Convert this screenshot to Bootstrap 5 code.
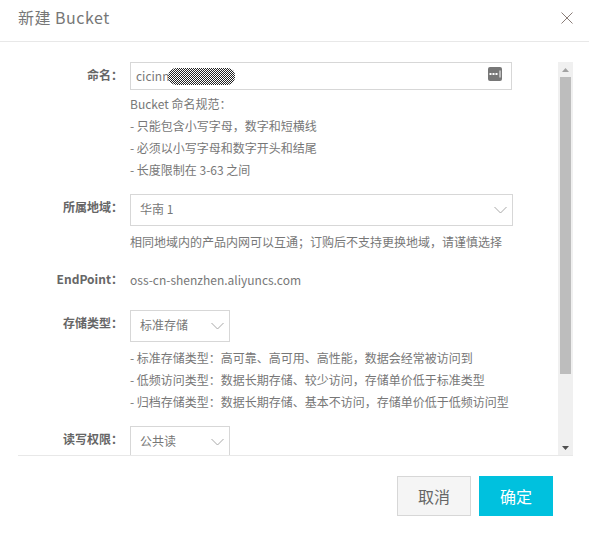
<!DOCTYPE html>
<html lang="zh">
<head>
<meta charset="utf-8">
<title>新建 Bucket</title>
<link href="https://cdn.jsdelivr.net/npm/bootstrap@5.3.0/dist/css/bootstrap.min.css" rel="stylesheet">
<style>
html,body{height:534px;overflow:hidden;background:#fff}
body{font-family:"Noto Sans CJK SC","Noto Sans",sans-serif;font-size:12px;color:#777}
.dlg-head{height:42px;padding:0 16px 0 18px;border-bottom:1px solid #e8e8e8}
.dlg-title{font-size:16px;font-weight:400;color:#777;margin:0;line-height:36px;letter-spacing:.5px;margin-top:-7px}
.x-btn{background:none;border:0;padding:0;line-height:0;margin-top:-5px}
.dlg-scroll{height:414px;margin:0 16px 0 18px;border-bottom:1px solid #e8e8e8;padding-top:20px;overflow:hidden}
.dlg-form{width:540px;height:393px;overflow:hidden}
.frow{display:flex}
.flabel{width:105px;flex:none;text-align:right;font-weight:700;line-height:26px;color:#666}
.fbody{margin-left:7px;flex:1;min-width:0}
.name-box{width:382px;height:28px;border:1px solid #d7d7d7;padding:0 5px;line-height:26px}
.blot{width:67px;height:17px;border-radius:9px 8px 8px 9px;margin-left:-1px;background-color:#fff;background-image:conic-gradient(#222 25%,#fff 0 50%,#222 0 75%,#fff 0);background-size:2px 2px}
.dots-ic{margin:-4px 4px 0 auto}
.hint{line-height:22px;margin:3px 0 0;color:#777}
.hint-sel{margin-top:5px}
.ep-text{line-height:28px}
.fake-sel{height:32px;border:1px solid #d7d7d7;padding:0 5px 2px 9px;color:#777}
.fake-sel svg{margin-top:2px}
.sel-wide{width:383px}
.sel-narrow{width:100px}
.sbar{width:15px;height:393px;background:#f0f0f0}
.sbar-btn{height:15px;flex:none}
.sbar-track{flex:1;padding:0 2px}
.sbar-thumb{height:297px;background:#bdbdbd}
.dlg-foot{padding:20px 36px 0 0}
.act{width:74px;height:40px;font-size:16px;padding:0;border-radius:0;line-height:38px}
.act-cancel{background:#f5f5f5;border:1px solid #d7d7d7;color:#666}
.act-ok{background:#00c1de;border:1px solid #00c1de;color:#fff}
.mb-gap-a{margin-bottom:13px}
.mb-gap-b{margin-bottom:13px}
.mb-gap-c{margin-bottom:16px}
.mb-gap-d{margin-bottom:13px}
</style>
</head>
<body>
<div class="dlg-head d-flex justify-content-between align-items-center">
  <h1 class="dlg-title">新建 Bucket</h1>
  <button class="x-btn" type="button" aria-label="关闭">
    <svg width="12" height="12" viewBox="0 0 12 12"><path d="M.5.5l11 11M11.500.5l-11 11" stroke="#8a7d78" stroke-width="1" fill="none"/></svg>
  </button>
</div>
<div class="dlg-scroll d-flex justify-content-between">
  <div class="dlg-form">
    <div class="frow mb-gap-a">
      <div class="flabel">命名：</div>
      <div class="fbody">
        <div class="name-box d-flex align-items-center"><span>cicinn</span><span class="blot"></span>
          <svg class="dots-ic" width="14" height="14" viewBox="0 0 14 14"><rect width="14" height="14" rx="2" fill="#777"/><path d="M1.500 6h2v2h-2zM4.500 6h2v2h-2zM7.500 6h2v2h-2z" fill="#fff"/><path d="M12 3.500v7" stroke="#fff"/></svg>
        </div>
        <p class="hint">Bucket 命名规范：<br>- 只能包含小写字母，数字和短横线<br>- 必须以小写字母和数字开头和结尾<br>- 长度限制在 3-63 之间</p>
      </div>
    </div>
    <div class="frow mb-gap-b">
      <div class="flabel">所属地域：</div>
      <div class="fbody">
        <div class="fake-sel sel-wide d-flex justify-content-between align-items-center"><span>华南 1</span>
          <svg width="13" height="8" viewBox="0 0 13 8"><path d="M.5 1l6 6 6-6" stroke="#a8a8a8" fill="none"/></svg>
        </div>
        <p class="hint hint-sel">相同地域内的产品内网可以互通；订购后不支持更换地域，请谨慎选择</p>
      </div>
    </div>
    <div class="frow mb-gap-c">
      <div class="flabel">EndPoint：</div>
      <div class="fbody ep-text">oss-cn-shenzhen.aliyuncs.com</div>
    </div>
    <div class="frow mb-gap-d">
      <div class="flabel">存储类型：</div>
      <div class="fbody">
        <div class="fake-sel sel-narrow d-flex justify-content-between align-items-center"><span>标准存储</span>
          <svg width="13" height="8" viewBox="0 0 13 8"><path d="M.5 1l6 6 6-6" stroke="#a8a8a8" fill="none"/></svg>
        </div>
        <p class="hint hint-sel">- 标准存储类型：高可靠、高可用、高性能，数据会经常被访问到<br>- 低频访问类型：数据长期存储、较少访问，存储单价低于标准类型<br>- 归档存储类型：数据长期存储、基本不访问，存储单价低于低频访问型</p>
      </div>
    </div>
    <div class="frow">
      <div class="flabel">读写权限：</div>
      <div class="fbody">
        <div class="fake-sel sel-narrow d-flex justify-content-between align-items-center"><span>公共读</span>
          <svg width="13" height="8" viewBox="0 0 13 8"><path d="M.5 1l6 6 6-6" stroke="#a8a8a8" fill="none"/></svg>
        </div>
      </div>
    </div>
  </div>
  <div class="sbar d-flex flex-column">
    <div class="sbar-btn d-flex align-items-center justify-content-center"><svg width="7" height="4" viewBox="0 0 7 4"><path d="M3.500 0L7 4H0z" fill="#a3a3a3"/></svg></div>
    <div class="sbar-track"><div class="sbar-thumb"></div></div>
    <div class="sbar-btn d-flex align-items-center justify-content-center"><svg width="7" height="4" viewBox="0 0 7 4"><path d="M0 0h7L3.500 4z" fill="#505050"/></svg></div>
  </div>
</div>
<div class="dlg-foot d-flex justify-content-end gap-2">
  <button class="btn act act-cancel" type="button">取消</button>
  <button class="btn act act-ok" type="button">确定</button>
</div>
</body>
</html>
